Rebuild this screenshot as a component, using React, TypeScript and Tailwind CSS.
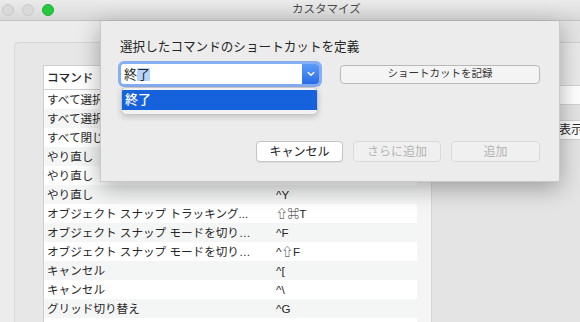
import React from "react";

const FONT = "'Liberation Sans','Noto Sans CJK JP',sans-serif";

const rows: [string, string][] = [
  ["すべて選択", "⌘A"],
  ["すべて選択", "^A"],
  ["すべて閉じる", "⌥⌘W"],
  ["やり直し", "⇧⌘Z"],
  ["やり直し", "⌘Y"],
  ["やり直し", "^Y"],
  ["オブジェクト スナップ トラッキング...", "⇧⌘T"],
  ["オブジェクト スナップ モードを切り…", "^F"],
  ["オブジェクト スナップ モードを切り…", "^⇧F"],
  ["キャンセル", "^["],
  ["キャンセル", "^\\"],
  ["グリッド切り替え", "^G"],
  ["直交モード切り替え", "^L"],
];

export default function App() {
  return (
    <div
      className="relative w-[580px] h-[322px] overflow-hidden bg-[#ececec] flex flex-col text-[#262626]"
      style={{ fontFamily: FONT }}
    >
      {/* Title bar */}
      <div className="h-[21px] shrink-0 flex items-center bg-gradient-to-b from-[#ebebeb] to-[#d8d8d8] border-b border-[#c2c2c2]">
        <div className="flex items-center gap-[8px] pl-[2px]">
          <div className="w-[12px] h-[12px] rounded-full bg-[#d9d9d9] border border-[#c9c9c9]" />
          <div className="w-[12px] h-[12px] rounded-full bg-[#d9d9d9] border border-[#c9c9c9]" />
          <div className="w-[12px] h-[12px] rounded-full bg-[#27c840] border border-[#1fae35]" />
        </div>
        <div className="ml-[238px] text-[11.5px] text-[#4a4a4a] leading-none">カスタマイズ</div>
      </div>

      {/* Window content */}
      <div className="flex-1 flex">
        <div className="w-[432px] shrink-0 pl-[14px] pt-[21px] flex">
          <div className="flex-1 bg-[#e7e7e7] border-t border-l border-[#d6d6d6] rounded-tl-[5px] pl-[28px] pt-[22px] flex">
            <div className="w-[374px] bg-white border-l border-[#cfcfcf] flex flex-col">
              <div className="h-[25px] shrink-0 flex items-center border-t border-b border-[#d0d0d0] bg-white">
                <div className="w-[228px] pl-[3px] text-[11.6px] font-medium">コマンド</div>
                <div className="pl-[3px] text-[11.6px] font-medium border-l border-[#e0e0e0]">ショートカット</div>
              </div>
              {rows.map(([cmd, sc], i) => (
                <div
                  key={i}
                  className={
                    "h-[19px] shrink-0 flex items-center text-[11.6px] " +
                    (i % 2 === 1 ? "bg-[#f4f5f5]" : "bg-white")
                  }
                >
                  <div className="w-[228px] pl-[3px] whitespace-nowrap overflow-hidden">{cmd}</div>
                  <div className="pl-[4px] whitespace-nowrap">{sc}</div>
                </div>
              ))}
            </div>
            <div className="w-[15px] bg-[#f5f5f5] border-r border-[#d6d6d6]" />
          </div>
        </div>
        <div className="flex-1 bg-[#e4e4e4] flex flex-col">
          <div className="h-[22px] bg-[#e4e4e4] border-b border-[#cfcfcf]" />
          <div className="h-[42px] bg-[#eaeaea]" />
          <div className="h-[20px] bg-white border-y border-[#d4d4d4]" />
          <div className="h-[15px]" />
          <div className="ml-[124px] h-[20px] bg-white border border-[#cfcfcf] rounded-[3px] text-[12px] pl-[2px] flex items-center whitespace-nowrap overflow-hidden">
            表示
          </div>
        </div>
      </div>

      {/* Sheet dialog */}
      <div className="absolute left-[100px] top-[21px] w-[460px] h-[161px] bg-[#ececec] shadow-[0_6px_22px_rgba(0,0,0,0.32)] border-x border-b border-[#c9c9c9] px-[19px] pt-[18px] flex flex-col">
        <div className="text-[12.6px] leading-[16px]">選択したコマンドのショートカットを定義</div>
        <div className="mt-[9px] flex items-center">
          <div className="ml-[1px] w-[198px] h-[20px] flex rounded-[3px] shadow-[0_0_0_3px_#86aef2] bg-white">
            <div className="flex-1 flex items-center pl-[3px] text-[13px] leading-none">
              <span>終</span>
              <span className="bg-[#b3d4fd]">了</span>
            </div>
            <div className="w-[17px] h-full rounded-r-[3px] bg-gradient-to-b from-[#5c9cf7] to-[#2a6ce6] flex items-center justify-center">
              <svg width="8" height="6" viewBox="0 0 8 6">
                <path d="M1.2 1.5 L4 4.3 L6.8 1.5" fill="none" stroke="white" strokeWidth="1.4" strokeLinecap="round" strokeLinejoin="round" />
              </svg>
            </div>
          </div>
          <div className="ml-auto w-[200px] h-[19px] rounded-[4px] border border-[#b8b8b8] bg-[#f4f4f4] flex items-center justify-center text-[10.5px] text-[#333]">
            ショートカットを記録
          </div>
        </div>
        <div className="mt-[57px] flex justify-end gap-[10px]">
          <div className="w-[87px] h-[21px] rounded-[4px] bg-white border border-[#c4c4c4] shadow-[0_1px_0_rgba(0,0,0,0.06)] flex items-center justify-center text-[12px] text-[#222]">
            キャンセル
          </div>
          <div className="w-[88px] h-[21px] rounded-[4px] bg-[#f0f0f0] border border-[#d9d9d9] flex items-center justify-center text-[12px] text-[#b4b4b4]">
            さらに追加
          </div>
          <div className="w-[89px] h-[21px] rounded-[4px] bg-[#f0f0f0] border border-[#d9d9d9] flex items-center justify-center text-[12px] text-[#b4b4b4]">
            追加
          </div>
        </div>
      </div>

      {/* Dropdown list */}
      <div className="absolute left-[121px] top-[87px] w-[197px] h-[28px] rounded-[5px] bg-[#f2f2f2] border border-[#c6c6c6] shadow-[0_2px_6px_rgba(0,0,0,0.18)] pt-[2px] overflow-hidden">
        <div className="h-[20px] bg-[#1662dd] text-white text-[13px] font-medium flex items-center pl-[3px]">
          終了
        </div>
      </div>
    </div>
  );
}
